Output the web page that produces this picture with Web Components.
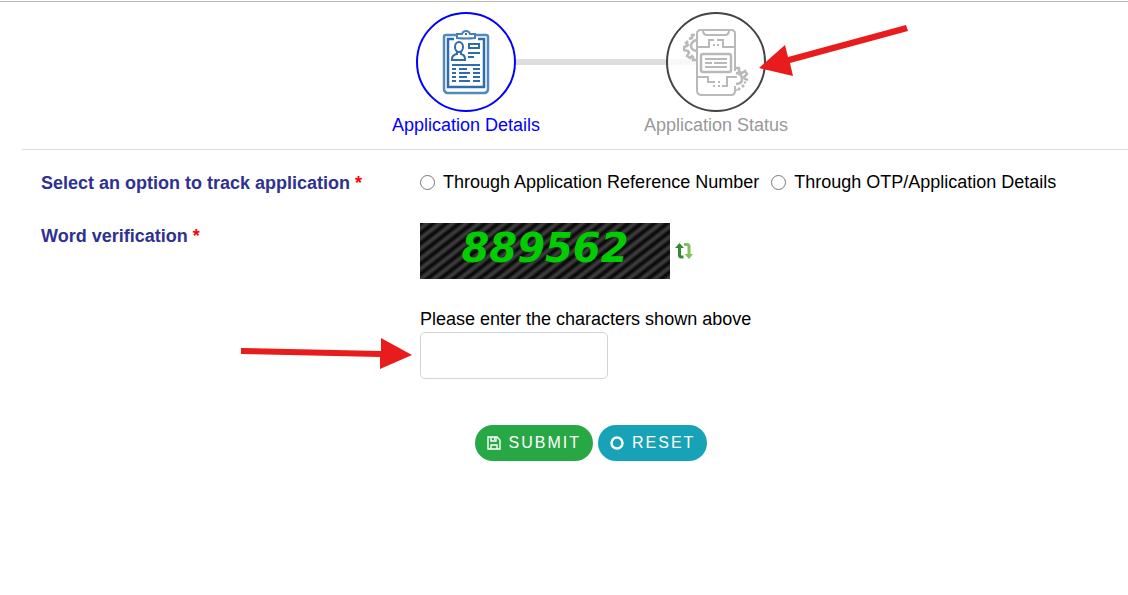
<!DOCTYPE html>
<html lang="en">
<head>
<meta charset="utf-8">
<title>Track Application</title>
<style>
    body {
        margin: 0;
        background: #fff;
        color: #000;
        font-family: Arial, "Liberation Sans", sans-serif;
        font-size: 18px;
        line-height: 26px;
    }
</style>
</head>
<body>
<track-page></track-page>

<script>
const icons = {
    details: `
        <svg width="48" height="66" viewBox="0 0 48 66" fill="none" stroke="#2f6cad" stroke-width="2" aria-hidden="true">
            <path d="M14 6H4q-2 0-2 2v52q0 3 3 4h38q3-1 3-4V8q0-2-2-2H34" stroke="#5189c0" stroke-width="2.500"/>
            <path d="M12 10H6v48h36V10h-6" stroke-width="2.500"/>
            <path d="M15 9V5h5q1-3 4-3t4 3h5v4q-9 1-18 0z" stroke="#4580ba"/>
            <path d="M23 5h2"/>
            <ellipse cx="17" cy="18" rx="4" ry="5"/>
            <path d="M15 22v3q-5 1-5 5v1h13v-1q0-4-4-5v-3M27 15h10v4H27zM26 24h12M26 28h6M10 36h28"/>
            <path d="M10 40h4m3 0h8m6 0h7M10 44h4m3 0h11m3 0h7M10 48h4m3 0h8m6 0h7M10 52h4m3 0h11m3 0h7"/>
        </svg>`,
    status: `
        <svg width="66" height="68" viewBox="0 -1 66 68" fill="none" stroke="#b9b9b9" stroke-width="2" aria-hidden="true">
            <path d="M14 19V5q0-4 4-4h30q4 0 4 4v37M14 19v43q0 4 5 4h29q4 0 4-4v-5"/>
            <path d="M20 1q0 5 4 5h18q4 0 4-5"/>
            <path d="M15 18h11v-7h5m3 0h2m-2 5h2m-6 0h2m4-5h4v7h12"/>
            <rect x="18" y="25" width="30" height="18" rx="2" stroke-width="2.500"/>
            <path d="M22 30h22M22 34h7m2 0h13M22 38h22"/>
            <path d="M15 48h10v5h6m-1 4h2m3 0h2m-2-4h2m-7 0h2m7 4h5v-9h10"/>
            <path d="M12 6h-3v3l-3 1m-1 2l-2 2 2 2-1 1-3 1v3l4 1 1 2-2 3 3 2 2-2 1 1v3h3M13 11q-5 2-5 6t6 5" stroke-width="2.500"/>
            <path d="M53 39h3v4l3 1 3-2 2 3-3 3 1 2 3 1m-2 2l-2 1m0 2l-2 2m-2 1l-2 2m-2-1v2M53 44q6 1 6 6t-6 5" stroke-width="2.500"/>
        </svg>`,
    save: `
        <svg width="14" height="14" viewBox="0 0 14 14" fill="none" stroke="#fff" stroke-width="1.400" aria-hidden="true">
            <path d="M1 1h9l3 3v9H1zM4 13V9h6v4M4 1v4h5V1"/>
            <path d="M7.500 1v3"/>
        </svg>`,
    circle: `
        <svg width="14" height="14" viewBox="0 0 14 14" fill="none" stroke="#fff" stroke-width="2.500" aria-hidden="true">
            <circle cx="7" cy="7" r="5.500"/>
        </svg>`,
    refresh: `
        <svg width="18" height="18" viewBox="0 0 18 18" fill="none" stroke-width="3" aria-hidden="true">
            <path d="M4.500 5v8q0 2 2 2h2" stroke="#338a33"/>
            <path d="M0 6l4.500-5L9 6z" fill="#338a33"/>
            <path d="M9 2.500h3q2 0 2 2V13" stroke="#7fbf5c"/>
            <path d="M9.500 12H18l-4 5z" fill="#7fbf5c"/>
        </svg>`
};

// One round step of the wizard, with the line that joins it to its neighbours
class WizardStep extends HTMLElement {
    connectedCallback() {
        this.attachShadow({ mode: "open" }).innerHTML = `
        <style>
            :host {
                display: block;
                flex: 0 1 250px;
                text-align: center;
                color: #999;
            }

            :host([active]) {
                color: #0000ff;
            }

            .track {
                display: flex;
                align-items: center;
            }

            .track::before,
            .track::after {
                content: "";
                flex: 1;
                height: 6px;
                background: #ddd;
            }

            :host(:first-of-type) .track::before,
            :host(:last-of-type) .track::after {
                background: none;
            }

            .circle {
                box-sizing: border-box;
                display: flex;
                align-items: center;
                justify-content: center;
                width: 100px;
                height: 100px;
                border: 2px solid #444;
                border-radius: 50%;
                background: linear-gradient(#f8f8f8, #f8f8f8) 0 50% / 28px 6px no-repeat;
            }

            :host([active]) .circle {
                border-color: #0000ff;
                background: none;
            }
        </style>

        <div class="track"><div class="circle">${icons[this.getAttribute("icon")]}</div></div>
        <slot></slot>
        `;
    }
}

// Label on the left, control on the right
class FormRow extends HTMLElement {
    connectedCallback() {
        this.attachShadow({ mode: "open" }).innerHTML = `
        <style>
            :host {
                display: grid;
                grid-template-columns: 379px 1fr;
                align-items: start;
            }

            .label {
                font-weight: 700;
                color: #2e3192;
            }

            .label span {
                color: #ff0000;
            }
        </style>

        <div class="label">${this.getAttribute("label")} <span>*</span></div>
        <slot></slot>
        `;
    }
}

class TrackOptions extends HTMLElement {
    connectedCallback() {
        this.attachShadow({ mode: "open" }).innerHTML = `
        <style>
            :host {
                display: flex;
                flex-wrap: wrap;
                gap: 0 12px;
                line-height: 24px;
            }

            label {
                display: flex;
                align-items: center;
                gap: 8px;
            }

            input {
                width: 15px;
                height: 15px;
                margin: 0;
            }
        </style>

        <label><input type="radio" name="option">Through Application Reference Number</label>
        <label><input type="radio" name="option">Through OTP/Application Details</label>
        `;
    }
}

class WordCaptcha extends HTMLElement {
    connectedCallback() {
        this.attachShadow({ mode: "open" }).innerHTML = `
        <style>
            :host {
                display: block;
            }

            .picture {
                display: flex;
                align-items: center;
                gap: 5px;
                margin-bottom: 27px;
            }

            .code {
                box-sizing: border-box;
                width: 250px;
                height: 56px;
                background: repeating-linear-gradient(142deg, #0a0a0a 0 1px, #3c3c3c 4px 5px, #0a0a0a 8px);
                color: #00cc00;
                font: italic bold 40px/50px "DejaVu Sans", sans-serif;
                text-align: center;
            }

            button {
                display: flex;
                padding: 0;
                border: 0;
                background: none;
            }

            label {
                display: block;
            }

            input {
                box-sizing: border-box;
                display: block;
                width: 188px;
                height: 47px;
                padding: 6px 12px;
                border: 1px solid #ced4da;
                border-radius: 5px;
                font: inherit;
            }
        </style>

        <div class="picture">
            <div class="code">889562</div>
            <button type="button" aria-label="Refresh">${icons.refresh}</button>
        </div>
        <label for="word">Please enter the characters shown above</label>
        <input id="word" type="text">
        `;
    }
}

class PillButton extends HTMLElement {
    connectedCallback() {
        this.attachShadow({ mode: "open" }).innerHTML = `
        <style>
            :host {
                display: block;
            }

            button {
                display: flex;
                align-items: center;
                gap: 8px;
                padding: 6px 12px;
                border: 0;
                border-radius: 18px;
                background: var(--pill-color);
                color: #fff;
                font: inherit;
                font-size: 16px;
                line-height: 24px;
                letter-spacing: 2px;
            }
        </style>

        <button type="button">${icons[this.getAttribute("icon")]}<span><slot></slot></span></button>
        `;
    }
}

// Red pointer drawn over the page
class RedArrow extends HTMLElement {
    connectedCallback() {
        const [width, height] = this.getAttribute("size").split(" ");
        this.attachShadow({ mode: "open" }).innerHTML = `
        <style>
            :host {
                display: block;
                position: absolute;
                pointer-events: none;
            }

            svg {
                display: block;
            }
        </style>

        <svg width="${width}" height="${height}" fill="#e81c1c" aria-hidden="true"><path d="${this.getAttribute("path")}"/></svg>
        `;
    }
}

class TrackPage extends HTMLElement {
    connectedCallback() {
        this.attachShadow({ mode: "open" }).innerHTML = `
        <style>
            :host {
                display: block;
                position: relative;
                margin-top: 1px;
                border-top: 1px solid #bbb;
            }

            .steps {
                display: flex;
                justify-content: center;
                padding: 10px 0 11px 32px;
                margin-left: 22px;
                border-bottom: 1px solid #ddd;
            }

            form {
                display: grid;
                gap: 27px;
                padding: 20px 0 0 41px;
            }

            .buttons {
                display: flex;
                justify-content: center;
                gap: 5px;
                padding: 19px 0 0 13px;
            }

            .to-status {
                left: 759px;
                top: 21px;
            }

            .to-word {
                left: 241px;
                top: 336px;
            }
        </style>

        <div class="steps">
            <wizard-step icon="details" active>Application Details</wizard-step>
            <wizard-step icon="status">Application Status</wizard-step>
        </div>
        <form>
            <form-row label="Select an option to track application"><track-options></track-options></form-row>
            <form-row label="Word verification"><word-captcha></word-captcha></form-row>
            <div class="buttons">
                <pill-button icon="save" style="--pill-color: #28a745">SUBMIT</pill-button>
                <pill-button icon="circle" style="--pill-color: #17a2b8">RESET</pill-button>
            </div>
        </form>
        <red-arrow class="to-status" size="150 54" path="M0 45L26 22L29 34L147 2L149 8L31 40L34 53Z"></red-arrow>
        <red-arrow class="to-word" size="172 32" path="M0 10L140 13V0L171 17L139 31V19L0 16Z"></red-arrow>
        `;
    }
}

customElements.define("wizard-step", WizardStep);
customElements.define("form-row", FormRow);
customElements.define("track-options", TrackOptions);
customElements.define("word-captcha", WordCaptcha);
customElements.define("pill-button", PillButton);
customElements.define("red-arrow", RedArrow);
customElements.define("track-page", TrackPage);
</script>
</body>
</html>
